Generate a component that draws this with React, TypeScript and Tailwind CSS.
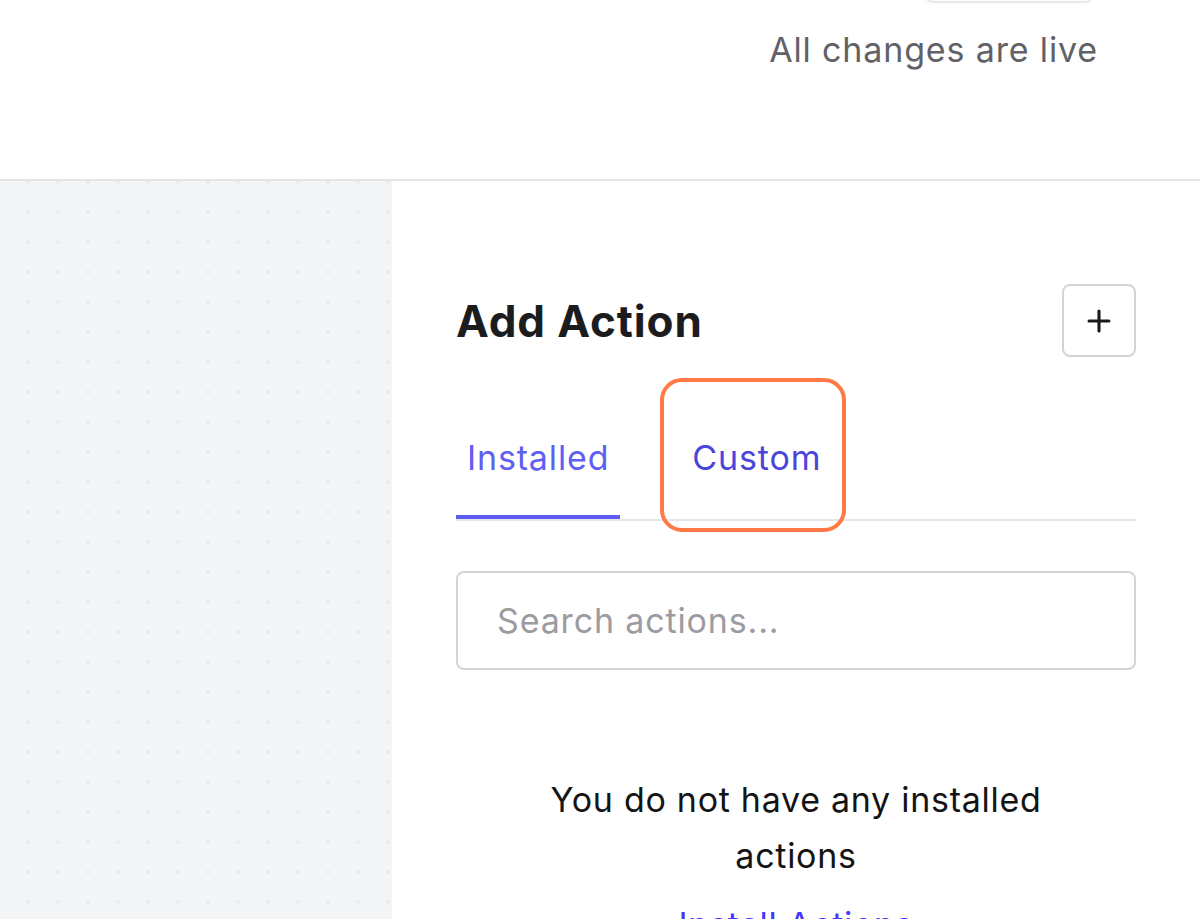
import { Plus } from "lucide-react";

export default function App() {
  return (
    <div className="h-[919px] w-full overflow-hidden bg-white font-['Inter',sans-serif] tracking-[0.025em]">
      <header className="flex h-[181px] flex-col items-end border-b-2 border-[#e3e4e6] pr-[102px]">
        <button className="-mt-[40px] mr-[5px] h-[41px] w-[168px] rounded-lg bg-white shadow-[0_1px_3px_rgba(0,0,0,0.18)]" />
        <p className="mt-[25px] text-[34px] leading-[48px] tracking-[0.025em] text-[#616167]">All changes are live</p>
      </header>

      <div className="flex h-[738px]">
        <aside className="w-[392px] shrink-0 bg-[#f4f5f7] bg-[radial-gradient(circle,#e8eaed_1.5px,transparent_1.8px)] bg-size-[30px_30px] bg-position-[13px_16px]" />

        <section className="relative flex-1 px-[64px] pt-[103px]">
          <div className="flex items-center justify-between">
            <h1 className="text-[44px] font-bold leading-none tracking-[0.02em] text-[#1c1c1e]">Add Action</h1>
            <button className="flex h-[73px] w-[74px] items-center justify-center rounded-lg border-2 border-[#d4d4d6] bg-white text-[#1a1a1a]">
              <Plus size={34} strokeWidth={2.2} />
            </button>
          </div>

          <div className="mt-[53px] flex items-end gap-[61px] border-b-2 border-[#e5e6e8]">
            <button className="border-b-4 border-[#5d5cf2] px-[11px] pt-[24px] pb-[33px] text-[34px] leading-[48px] tracking-[0.025em] text-[#5f5ff2]">
              Installed
            </button>
            <button className="px-[11px] pt-[24px] pb-[37px] text-[34px] leading-[48px] tracking-[0.025em] text-[#4b45dc]">
              Custom
            </button>
          </div>

          <div className="pointer-events-none absolute left-[268px] top-[197px] h-[154px] w-[186px] rounded-[22px] border-4 border-[#ff7a45]" />

          <input
            placeholder="Search actions..."
            className="mt-[50px] h-[99px] w-full rounded-lg border-2 border-[#d4d4d6] px-[39px] text-[34px] tracking-[0.025em] text-[#1c1c1e] outline-none placeholder:text-[#9b9ba0]"
          />

          <div className="mt-[102px] flex flex-col items-center text-center tracking-[0.045em]">
            <p className="w-[560px] text-[34px] leading-[56px] text-[#141414]">
              You do not have any installed actions
            </p>
            <a href="#" className="mt-[13px] text-[34px] leading-[56px] text-[#4a35ff]">
              Install Actions
            </a>
          </div>
        </section>
      </div>
    </div>
  );
}
